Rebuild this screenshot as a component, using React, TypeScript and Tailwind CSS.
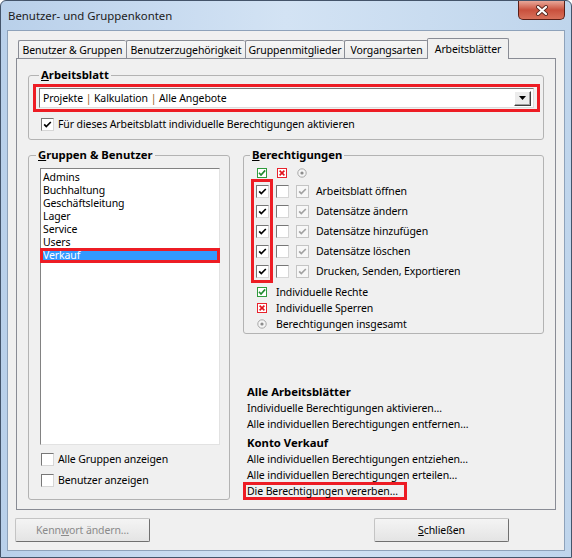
import React from "react";

function Box({ checked = false, muted = false }: { checked?: boolean; muted?: boolean }) {
  return (
    <span
      className={
        muted
          ? "inline-flex h-[13px] w-[13px] shrink-0 items-center justify-center border border-[#c4c4c4] bg-[#f7f7f7]"
          : "inline-flex h-[13px] w-[13px] shrink-0 items-center justify-center border border-t-[#777777] border-l-[#777777] border-r-[#d6d6d6] border-b-[#d6d6d6] bg-white"
      }
    >
      {checked && (
        <svg width="11" height="11" viewBox="0 0 11 11">
          <polyline
            points="2.2,5.3 4.3,7.5 8.8,3"
            fill="none"
            stroke={muted ? "#a2a2a2" : "#000"}
            strokeWidth="1.7"
          />
        </svg>
      )}
    </span>
  );
}

function GreenIcon() {
  return (
    <svg width="10" height="10" viewBox="0 0 10 10" className="shrink-0">
      <rect x="0.5" y="0.5" width="9" height="9" fill="#fff" stroke="#2f9a3c" />
      <polyline points="2,4.8 4,7 8.2,2.4" fill="none" stroke="#1f8a2e" strokeWidth="1.6" />
    </svg>
  );
}

function RedIcon() {
  return (
    <svg width="10" height="10" viewBox="0 0 10 10" className="shrink-0">
      <rect x="0.5" y="0.5" width="9" height="9" fill="#fff" stroke="#e8222c" />
      <path d="M2.6 2.6 L7.4 7.4 M7.4 2.6 L2.6 7.4" stroke="#e3121c" strokeWidth="1.6" />
    </svg>
  );
}

function RadioIcon() {
  return (
    <svg width="10" height="10" viewBox="0 0 10 10" className="shrink-0">
      <circle cx="5" cy="5" r="4.2" fill="#f4f4f4" stroke="#a8a8a8" />
      <circle cx="5" cy="5" r="1.6" fill="#8c8c8c" />
    </svg>
  );
}

const tabs = [
  { label: "Benutzer & Gruppen", w: "w-[108px]" },
  { label: "Benutzerzugehörigkeit", w: "w-[119px]" },
  { label: "Gruppenmitglieder", w: "w-[99px]" },
  { label: "Vorgangsarten", w: "w-[84px]" },
];

const groups = ["Admins", "Buchhaltung", "Geschäftsleitung", "Lager", "Service", "Users"];

const rights = [
  "Arbeitsblatt öffnen",
  "Datensätze ändern",
  "Datensätze hinzufügen",
  "Datensätze löschen",
  "Drucken, Senden, Exportieren",
];

export default function App() {
  return (
    <div className="flex h-[558px] w-[572px] flex-col overflow-hidden rounded-t-[6px] border border-[#44546a] bg-linear-to-r from-[#b9d0ea] via-[#d3e3f4] to-[#bfd5ec] font-['Noto_Sans',sans-serif] text-[10.5px] leading-[16px] tracking-[-0.1px] text-black">
      {/* Title bar */}
      <div className="flex h-[29px] shrink-0 justify-between">
        <div className="self-center pl-[7px] text-[11.4px] tracking-normal text-[#1b1b1b]">Benutzer- und Gruppenkonten</div>
        <div className="mr-[6px] flex h-[19px] w-[47px] items-center justify-center rounded-b-[5px] border border-t-0 border-[#5a1f17] bg-linear-to-b from-[#e8a799] via-[#c9503d] to-[#d8705a]">
          <svg width="14" height="11" viewBox="0 0 14 11">
            <path d="M3 2 L11 9 M11 2 L3 9" stroke="#5a2a22" strokeWidth="4" strokeLinecap="round" />
            <path d="M3 2 L11 9 M11 2 L3 9" stroke="#ffffff" strokeWidth="2.2" strokeLinecap="round" />
          </svg>
        </div>
      </div>

      {/* Client area */}
      <div className="mx-[6px] mb-[6px] flex flex-1 flex-col border border-[#8ea2ba] bg-[#f0f0f0] pt-[7px] pb-[7px]">
        {/* Tabs */}
        <div className="relative z-10 flex h-[20px] items-end pl-[10px]">
          {tabs.map((t) => (
            <div
              key={t.label}
              className={`${t.w} flex h-[18px] items-center justify-center whitespace-nowrap rounded-t-[2px] border-t border-l border-[#898c95] bg-linear-to-b from-[#f6f6f6] to-[#ebebeb]`}
            >
              {t.label}
            </div>
          ))}
          <div className="-mb-[1px] -ml-[1px] flex h-[21px] w-[82px] items-start justify-center whitespace-nowrap rounded-t-[2px] border-t border-l border-r border-[#898c95] bg-[#f0f0f0] pt-[2px]">
            Arbeitsblätter
          </div>
        </div>

        {/* Panel */}
        <div className="mx-[8px] flex h-[452px] flex-col border border-[#898c95] bg-[#f0f0f0] px-[11px] pt-[8px]">
          <fieldset className="min-w-0 rounded-[3px] border border-[#b3b3b3] pr-[3px] pl-[4px] pb-[7px]">
            <legend className="ml-[6px] px-[2px] text-[11.3px] font-bold tracking-normal">
              <span className="underline">A</span>rbeitsblatt
            </legend>
            <div className="mt-[1px] border-[3px] border-[#ed1c24] px-[3px] py-[1px]">
              <div className="flex h-[20px] items-center justify-between border border-t-[#7a7a7a] border-l-[#7a7a7a] border-r-[#dcdcdc] border-b-[#dcdcdc] bg-white pl-[3px] pr-[2px]">
                <span>
                  Projekte <span className="text-[#8a5a22]">|</span> Kalkulation{" "}
                  <span className="text-[#8a5a22]">|</span> Alle Angebote
                </span>
                <span className="flex h-[15px] w-[17px] items-center justify-center border border-t-white border-l-white border-r-[#404040] border-b-[#404040] bg-[#ececec] shadow-[inset_-1px_-1px_0_#a0a0a0]">
                  <svg width="7" height="4" viewBox="0 0 7 4">
                    <polygon points="0,0 7,0 3.5,4" fill="#000" />
                  </svg>
                </span>
              </div>
            </div>
            <div className="mt-[4px] ml-[8px] flex h-[16px] items-center gap-[4px]">
              <Box checked />
              <span>Für dieses Arbeitsblatt individuelle Berechtigungen aktivieren</span>
            </div>
          </fieldset>

          <div className="mt-[7px] flex gap-[13px]">
            {/* Left column */}
            <fieldset className="w-[202px] min-w-0 shrink-0 rounded-[3px] border border-[#b3b3b3] pr-[9px] pl-[11px] pb-[7px]">
              <legend className="-ml-[4px] px-[2px] text-[11.3px] font-bold tracking-normal">
                <span className="underline">G</span>ruppen &amp; Benutzer
              </legend>
              <div className="mt-[5px] h-[277px] border border-t-[#828282] border-l-[#828282] border-r-[#e2e2e2] border-b-[#e2e2e2] bg-white pt-[2px] leading-[13px]">
                {groups.map((g) => (
                  <div key={g} className="h-[13px] pl-[2px]">
                    {g}
                  </div>
                ))}
                <div className="h-[13px] bg-[#3399ff] pl-[2px] text-white outline-[3px] -outline-offset-2 outline-[#ed1c24]">
                  Verkauf
                </div>
              </div>
              <div className="mt-[6px] ml-[1px] flex h-[16px] items-center gap-[4px]">
                <Box />
                <span>Alle Gruppen anzeigen</span>
              </div>
              <div className="mt-[5px] ml-[1px] flex h-[16px] items-center gap-[4px]">
                <Box />
                <span>Benutzer anzeigen</span>
              </div>
            </fieldset>

            {/* Right column */}
            <div className="flex min-w-0 flex-1 flex-col">
              <fieldset className="min-w-0 rounded-[3px] border border-[#b3b3b3] pb-[1px]">
                <legend className="ml-[6px] px-[2px] text-[11.3px] font-bold tracking-normal">
                  <span className="underline">B</span>erechtigungen
                </legend>
                <div className="mt-[5px] flex h-[10px] gap-[10px] pl-[13px]">
                  <GreenIcon />
                  <RedIcon />
                  <RadioIcon />
                </div>
                <div className="mt-[3px] flex">
                  <div className="ml-[9px] flex flex-col pl-[3px] pr-[2px] outline-[3px] -outline-offset-1 outline-[#ed1c24]">
                    {rights.map((r) => (
                      <div key={r} className="flex h-[20px] items-center">
                        <Box checked />
                      </div>
                    ))}
                  </div>
                  <div className="ml-[5px] flex flex-col">
                    {rights.map((r) => (
                      <div key={r} className="flex h-[20px] items-center">
                        <Box />
                      </div>
                    ))}
                  </div>
                  <div className="ml-[7px] flex flex-col">
                    {rights.map((r) => (
                      <div key={r} className="flex h-[20px] items-center">
                        <Box checked muted />
                      </div>
                    ))}
                  </div>
                  <div className="ml-[7px] flex flex-col">
                    {rights.map((r) => (
                      <div key={r} className="flex h-[20px] items-center">
                        {r}
                      </div>
                    ))}
                  </div>
                </div>
                <div className="mt-[3px] flex flex-col pl-[13px]">
                  <div className="flex h-[16px] items-center gap-[9px]">
                    <GreenIcon />
                    <span>Individuelle Rechte</span>
                  </div>
                  <div className="flex h-[16px] items-center gap-[9px]">
                    <RedIcon />
                    <span>Individuelle Sperren</span>
                  </div>
                  <div className="flex h-[16px] items-center gap-[9px]">
                    <RadioIcon />
                    <span>Berechtigungen insgesamt</span>
                  </div>
                </div>
              </fieldset>

              <div className="mt-[50px] flex flex-col pl-[4px]">
                <div className="text-[11.3px] font-bold tracking-normal">Alle Arbeitsblätter</div>
                <div>Individuelle Berechtigungen aktivieren…</div>
                <div>Alle individuellen Berechtigungen entfernen…</div>
                <div className="mt-[3px] text-[11.3px] font-bold tracking-normal">Konto Verkauf</div>
                <div>Alle individuellen Berechtigungen entziehen…</div>
                <div>Alle individuellen Berechtigungen erteilen…</div>
                <div className="-mt-[1px] -ml-[4px] h-[18px] w-[164px] whitespace-nowrap border-[3px] border-[#ed1c24] pl-[1px] leading-[12px]">
                  Die Berechtigungen vererben…
                </div>
              </div>
            </div>
          </div>
        </div>

        {/* Buttons */}
        <div className="mt-[8px] flex justify-between pr-[55px] pl-[7px]">
          <div className="flex h-[24px] w-[135px] items-center justify-center rounded-[2px] border border-t-[#c4c4c4] border-l-[#c4c4c4] border-r-[#707070] border-b-[#707070] bg-linear-to-b from-[#f4f4f4] to-[#e4e4e4] text-[#8a8a8a]">
            <span>
              Kenn<span className="underline">w</span>ort ändern…
            </span>
          </div>
          <div className="flex h-[24px] w-[135px] items-center justify-center rounded-[2px] border border-t-[#c4c4c4] border-l-[#c4c4c4] border-r-[#707070] border-b-[#707070] bg-linear-to-b from-[#f4f4f4] to-[#e4e4e4]">
            <span>
              <span className="underline">S</span>chließen
            </span>
          </div>
        </div>
      </div>
    </div>
  );
}
